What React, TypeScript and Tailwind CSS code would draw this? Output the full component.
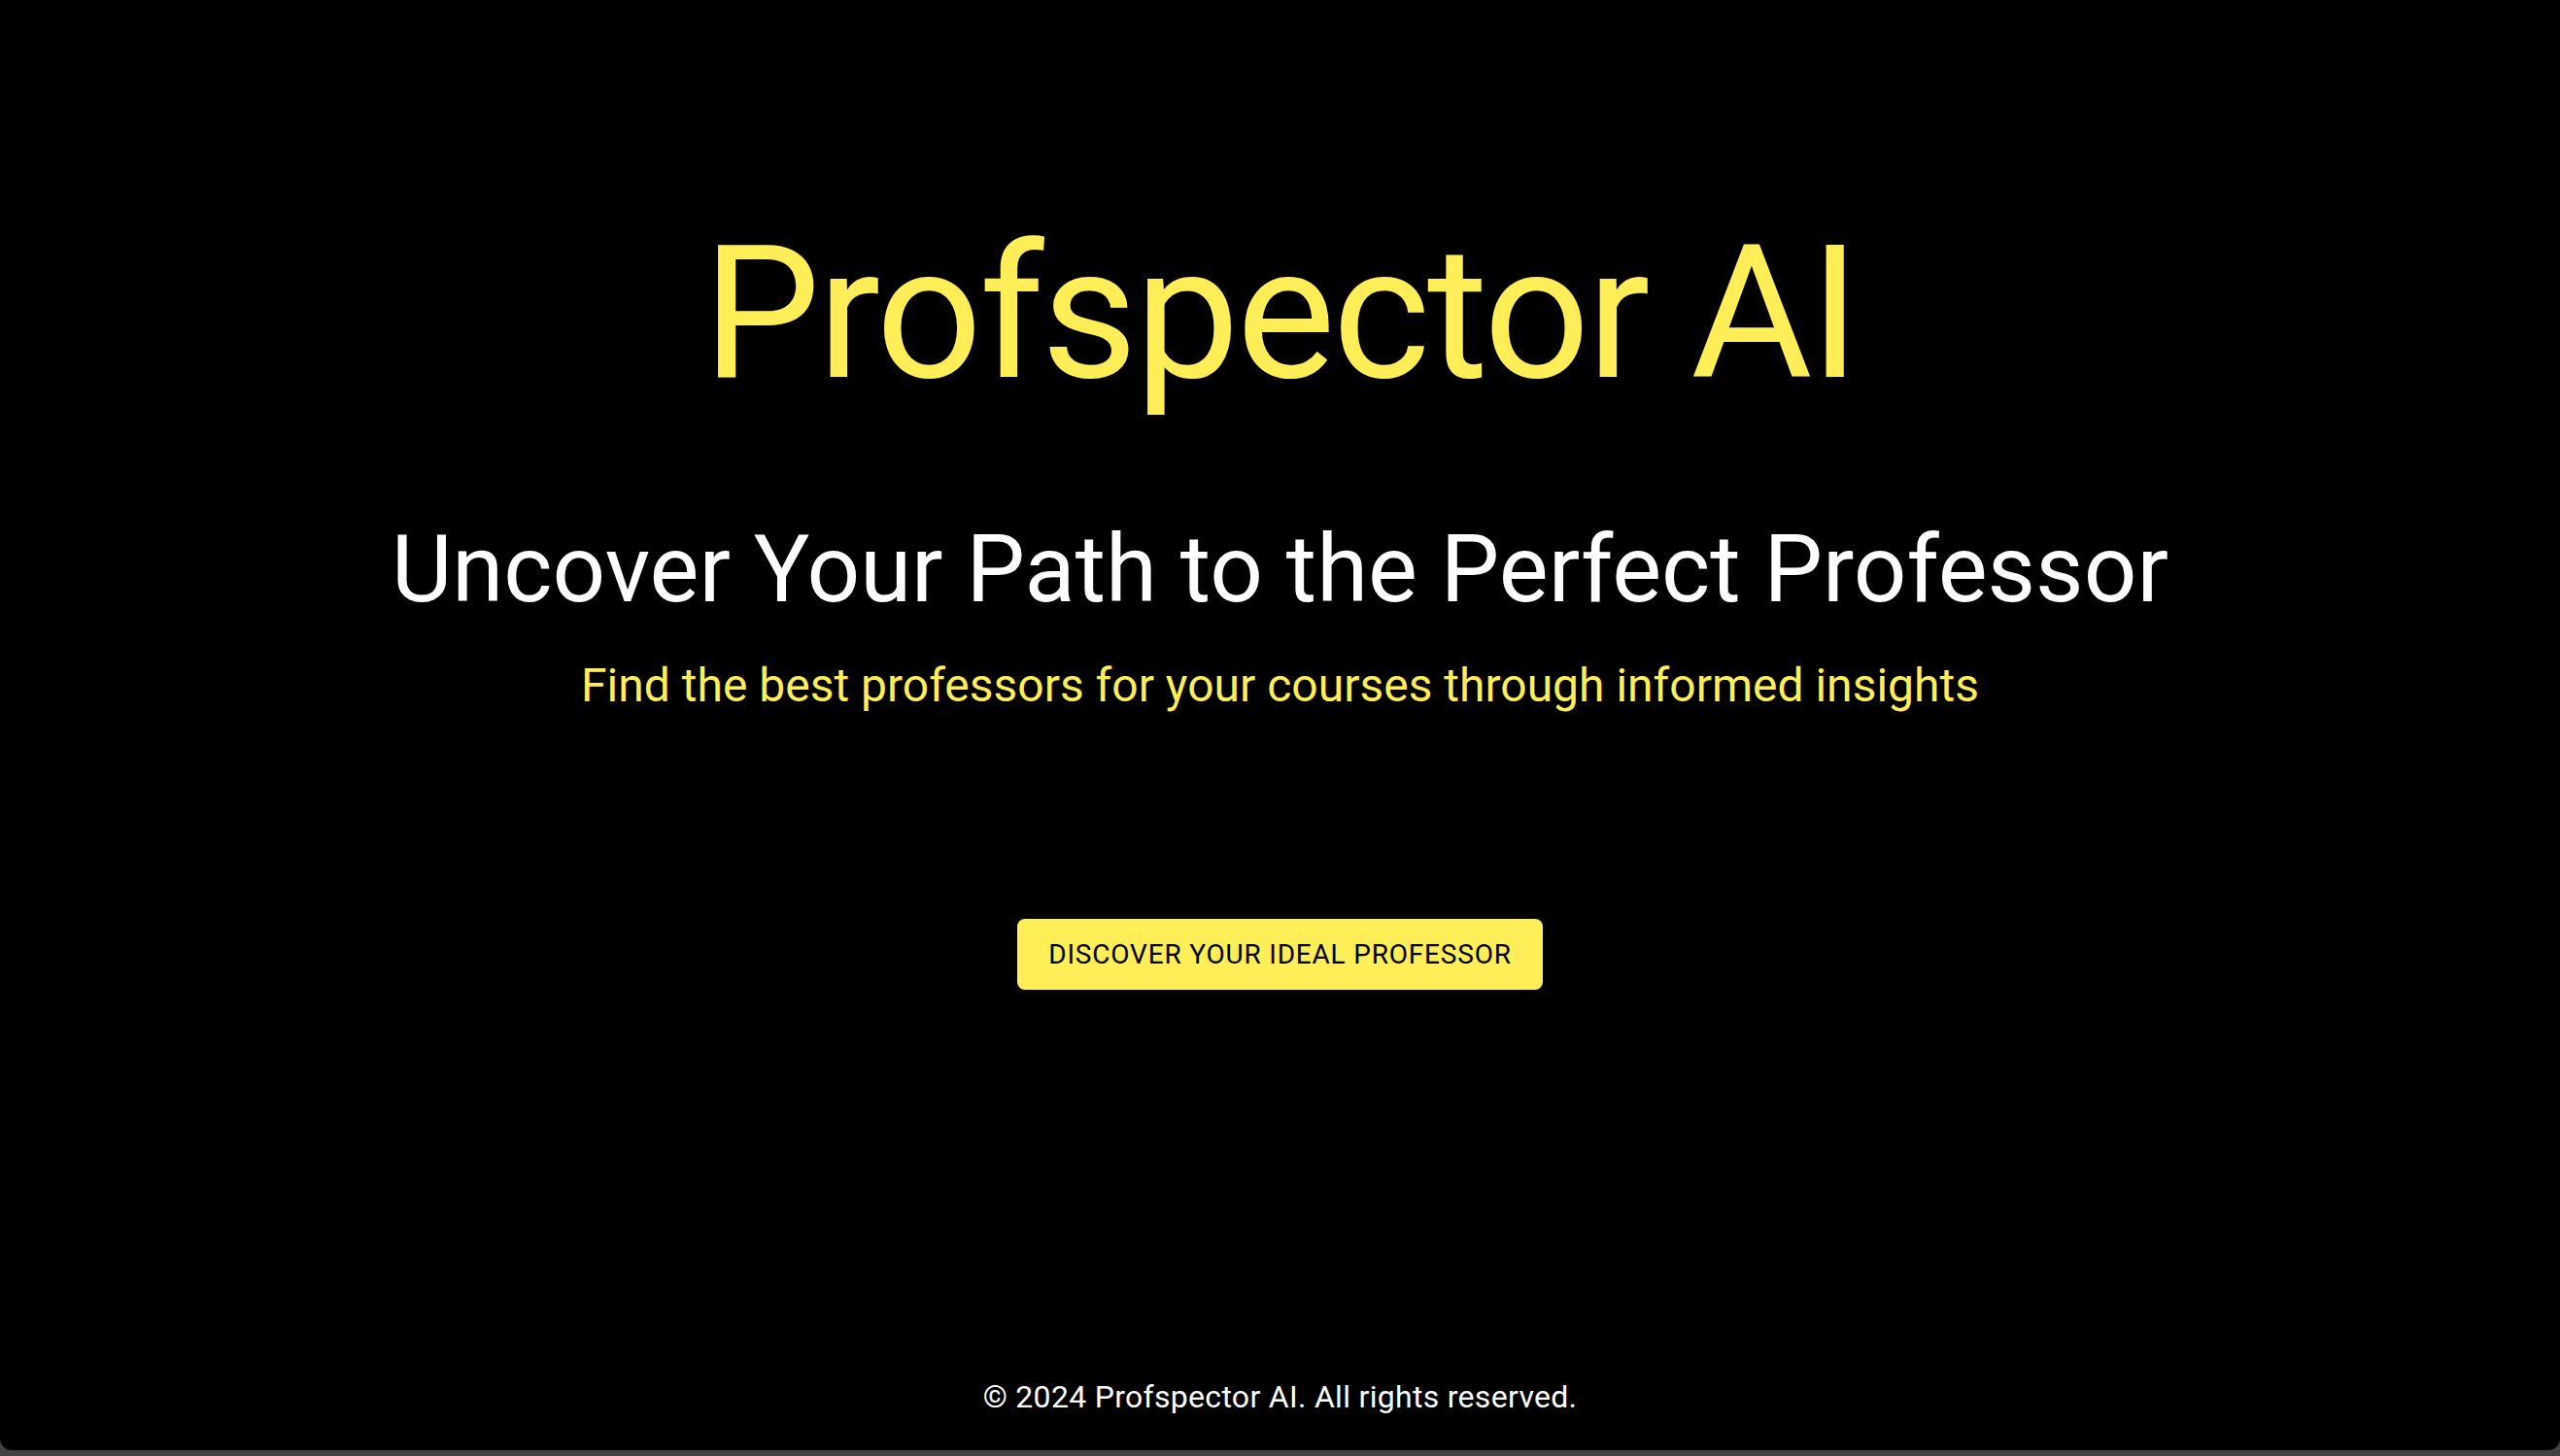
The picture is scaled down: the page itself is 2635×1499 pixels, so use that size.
export default function App() {
  return (
    <div className="min-h-screen w-full bg-[#424242] font-[Roboto,sans-serif]">
      <div className="flex h-[1493px] flex-col items-center rounded-b-[12px] bg-black text-center">
        <h1 className="mt-[211px] text-[192px] font-normal leading-[1.167] tracking-[-0.01562em] text-[#ffee58]">
          Profspector AI
        </h1>
        <h2 className="mt-[95px] text-[96px] font-normal leading-[1.167] text-white">
          Uncover Your Path to the Perfect Professor
        </h2>
        <p className="mt-[32px] text-[48px] font-normal leading-[1.334] text-[#ffee58]">
          Find the best professors for your courses through informed insights
        </p>
        <button className="mt-[208px] h-[73px] rounded-[8px] bg-[#ffee58] px-[32px] text-[28px] font-normal uppercase leading-[1.75] tracking-[0.02857em] text-black">
          Discover your ideal professor
        </button>
        <footer className="mt-auto mb-[31px] text-[32px] leading-[1.5] tracking-[0.00938em] text-white">
          © 2024 Profspector AI. All rights reserved.
        </footer>
      </div>
    </div>
  );
}
